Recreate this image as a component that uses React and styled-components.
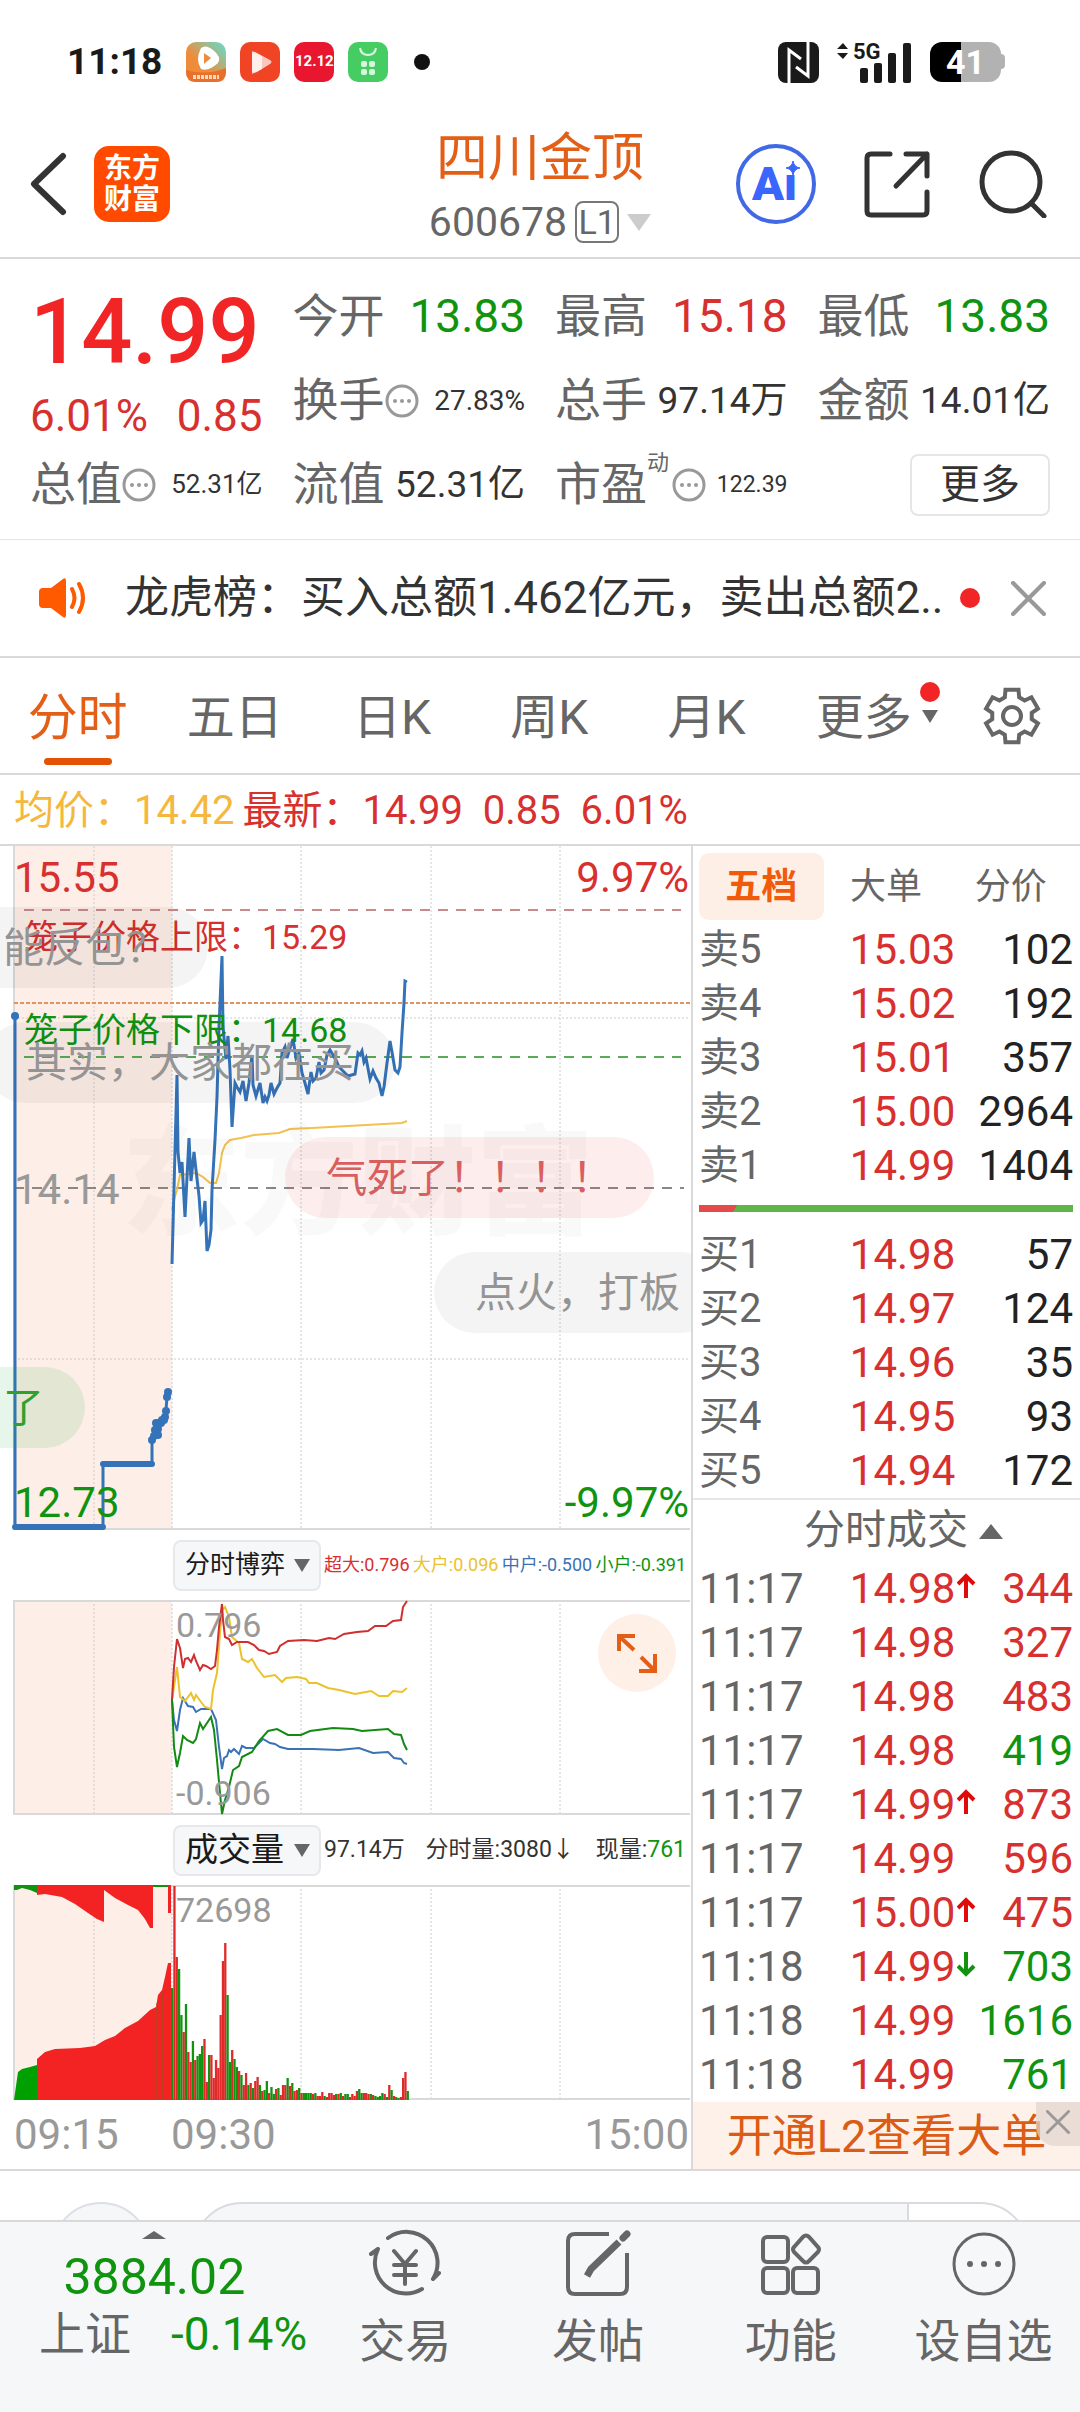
import React from "react";
import styled, { createGlobalStyle } from "styled-components";

const RED = "#d7302f";
const BRIGHT_RED = "#f12525";
const GREEN = "#109410";
const ORANGE = "#e35f17";
const GRAY = "#666";
const DARK = "#333";
const LINE = "#d9d9d9";

const GlobalStyle = createGlobalStyle`
    * {
        box-sizing: border-box;
    }

    body {
        margin: 0;
        background: #fff;
        color: ${DARK};
        font-family: Roboto, "Noto Sans CJK SC", sans-serif;
        line-height: 1.2;
    }

    button {
        margin: 0;
        padding: 0;
        border: 0;
        background: none;
        color: inherit;
        font: inherit;
        cursor: pointer;
    }

    svg {
        display: block;
    }
`

const Page = styled.div`
    overflow: hidden;
`

/* status bar */

const StatusBar = styled.div`
    display: flex;
    align-items: center;
    height: 124px;
    padding: 0 79px 0 67px;
    color: #1a1a1a;
`

const Clock = styled.div`
    margin-right: 24px;
    font-size: 37px;
    font-weight: 700;
`

const AppIcons = styled.div`
    display: flex;
    align-items: center;
    gap: 14px;
    flex: 1;
`

const SaleIcon = styled.div`
    width: 40px;
    height: 40px;
    border-radius: 10px;
    background: #e8162f;
    color: #fff;
    font-size: 15px;
    font-weight: 700;
    line-height: 38px;
    text-align: center;
`

const Dot = styled.i`
    width: ${props => props.size}px;
    height: ${props => props.size}px;
    margin-left: ${props => props.gap || 0}px;
    border-radius: 50%;
    background: ${props => props.color};
`

const StatusIcons = styled.div`
    display: flex;
    align-items: center;
    gap: 18px;
`

const Battery = styled.div`
    position: relative;
    width: 71px;
    height: 40px;
    border-radius: 12px;
    background: linear-gradient(90deg, #000 31px, #b2b2b2 31px);
    color: #fff;
    font-size: 34px;
    font-weight: 700;
    line-height: 40px;
    text-align: center;

    &::after {
        content: "";
        position: absolute;
        top: 12px;
        right: -4px;
        width: 4px;
        height: 15px;
        border-radius: 0 4px 4px 0;
        background: #b2b2b2;
    }
`

/* header */

const Header = styled.header`
    display: grid;
    grid-template-columns: 1fr auto 1fr;
    align-items: center;
    height: 135px;
    padding: 0 33px 15px 30px;
    border-bottom: 2px solid ${LINE};
`

const HeaderSide = styled.div`
    display: flex;
    align-items: center;
    justify-content: ${props => props.end ? "flex-end" : "flex-start"};
    gap: ${props => props.gap}px;
`

const HeaderTitle = styled.div`
    padding: 4px 0 0 3px;
`

const Logo = styled.div`
    width: 76px;
    height: 76px;
    padding: 7px 0;
    border-radius: 15px;
    background: #ff4a00;
    color: #fff;
    font-size: 28px;
    font-weight: 700;
    line-height: 31px;
    text-align: center;
`

const Title = styled.h1`
    margin: 0;
    color: ${ORANGE};
    font-size: 52px;
    font-weight: 400;
    line-height: 62px;
    text-align: center;
`

const Code = styled.button`
    display: flex;
    align-items: center;
    justify-content: center;
    gap: 8px;
    width: 100%;
    margin-top: 11px;
    color: ${GRAY};
    font-size: 41px;
    line-height: 42px;
`

const Level = styled.span`
    width: 44px;
    border: 2px solid #777;
    border-radius: 8px;
    font-size: 34px;
    line-height: 38px;
    text-align: center;
`

const Triangle = styled.i`
    width: 0;
    height: 0;
    border: solid transparent;
    border-width: 0 ${props => props.half}px;
    border-${props => props.up ? "bottom" : "top"}: ${props => props.tall}px solid ${props => props.color || GRAY};
`

/* quote figures */

const Stats = styled.section`
    display: grid;
    grid-template-columns: repeat(4, minmax(0, 1fr));
    grid-auto-rows: 84px;
    column-gap: 30px;
    padding: 16px 30px 12px;
    border-bottom: 1px solid #e6e6e6;
`

const PriceCell = styled.div`
    grid-row: span 2;
    display: flex;
    flex-direction: column;
    gap: 18px;
    padding-top: 18px;
`

const Price = styled.div`
    color: ${BRIGHT_RED};
    font-size: 90px;
    font-weight: 500;
    line-height: 80px;
`

const Change = styled.div`
    display: flex;
    justify-content: space-between;
    color: ${RED};
    font-size: 44px;
    line-height: 50px;
`

const Stat = styled.div`
    display: flex;
    align-items: center;
    white-space: nowrap;
`

const StatLabel = styled.span`
    color: ${GRAY};
    font-size: 46px;
`

const StatSup = styled.sup`
    align-self: flex-start;
    margin-right: 3px;
    font-size: 22px;
    line-height: 40px;
    color: ${GRAY};
`

const StatValue = styled.span`
    margin-left: auto;
    color: ${props => props.color || DARK};
    font-size: ${props => props.size}px;
`

const MoreButton = styled.button`
    align-self: center;
    justify-self: end;
    width: 140px;
    height: 62px;
    border: 2px solid #e4e6e8;
    border-radius: 8px;
    font-size: 40px;
`

/* notice */

const Notice = styled.section`
    display: flex;
    align-items: center;
    height: 118px;
    padding: 0 34px 0 38px;
    border-bottom: 2px solid ${LINE};
`

const NoticeText = styled.p`
    flex: 1;
    margin: 0 15px 0 37px;
    overflow: hidden;
    font-size: 44px;
    white-space: nowrap;
`

const CloseButton = styled.button`
    margin-left: 31px;
`

/* period tabs */

const Tabs = styled.nav`
    display: flex;
    height: 117px;
    border-bottom: 2px solid ${LINE};
`

const Tab = styled.button`
    position: relative;
    flex: 157;
    padding: 5px 2px 0 0;
    color: ${props => props.active ? ORANGE : GRAY};
    font-size: ${props => props.active ? 50 : 48}px;

    &::after {
        content: "";
        position: absolute;
        bottom: 8px;
        left: 50%;
        width: 68px;
        height: 7px;
        margin-left: -35px;
        border-radius: 4px;
        background: ${props => props.active ? "#e35205" : "transparent"};
    }
`

const TabMark = styled.span`
    position: absolute;
    top: 24px;
    right: 4px;
    display: flex;
    flex-direction: column;
    align-items: center;
    gap: 8px;
`

const SettingsButton = styled.button`
    flex: 138;
    display: flex;
    align-items: center;
    justify-content: center;
`

const Legend = styled.div`
    display: flex;
    height: 71px;
    padding-left: 14px;
    border-bottom: 2px solid ${LINE};
    font-size: 40px;
    line-height: 71px;
    white-space: pre;
    color: ${RED};
`

const Average = styled.span`
    margin-right: 8px;
    color: #f5b83d;
`

/* charts */

const Main = styled.main`
    display: grid;
    grid-template-columns: 77fr 43fr;
    border-bottom: 2px solid ${LINE};
`

const Charts = styled.section`
    min-width: 0;
    border-right: 2px solid ${LINE};
`

const Chart = styled.div`
    position: relative;
    height: ${props => props.tall}px;
    overflow: hidden;

    svg {
        width: 100%;
        height: 100%;
    }
`

const ChartLabel = styled.span`
    position: absolute;
    ${props => props.right ? "right: 2px" : `left: ${props.left}px`};
    top: ${props => props.top}px;
    color: ${props => props.color || "#999"};
    font-size: ${props => props.size}px;
    line-height: 42px;
    white-space: nowrap;
`

const Watermark = styled.span`
    position: absolute;
    top: 274px;
    left: 122px;
    color: rgba(0, 0, 0, 0.025);
    font-size: 118px;
    font-weight: 900;
    line-height: 130px;
`

const Bubble = styled.span`
    position: absolute;
    top: ${props => props.top}px;
    left: ${props => props.left}px;
    height: 81px;
    padding: 0 41px;
    border-radius: 41px;
    background: ${props => props.fill || "rgba(0, 0, 0, 0.045)"};
    color: ${props => props.color || "#949494"};
    font-size: 41px;
    line-height: 82px;
    white-space: nowrap;
`

const PanelBar = styled.div`
    display: flex;
    align-items: center;
    height: 70px;
    padding-left: 173px;
    white-space: nowrap;
`

const PanelSelect = styled.button`
    display: flex;
    flex: none;
    align-items: center;
    justify-content: space-between;
    width: 148px;
    height: 51px;
    padding: 0 9px 0 10px;
    border: 2px solid #e6e8ec;
    border-radius: 8px;
    background: #f6f7f9;
    color: #1a1a1a;
    font-size: ${props => props.size}px;
`

const PanelValues = styled.div`
    display: flex;
    flex: 1;
    justify-content: space-between;
    padding: 0 5px 0 3px;
    font-size: ${props => props.size}px;
`

const Tint = styled.span`
    color: ${props => props.color};
`

const ExpandButton = styled.button`
    position: absolute;
    top: 14px;
    right: 15px;
    width: 78px;
    height: 78px;
    border-radius: 50%;
    background: #feefe7;
`

const TimeAxis = styled.div`
    display: flex;
    height: 68px;
    padding: 0 2px 0 14px;
    color: #999;
    font-size: 42px;
    line-height: 70px;
`

const AxisTime = styled.span`
    width: ${props => props.last ? "auto" : "157px"};
    margin-left: ${props => props.last ? "auto" : 0};
`

/* order book */

const Book = styled.aside`
    min-width: 0;
`

const BookTabs = styled.div`
    display: flex;
    margin: 7px 7px 0 6px;
`

const BookTab = styled.button`
    flex: 1;
    height: 67px;
    padding-top: 3px;
    border-radius: 10px;
    background: ${props => props.active ? "#feefe6" : "none"};
    color: ${props => props.active ? "#f15a0a" : GRAY};
    font-size: 36px;
    font-weight: ${props => props.active ? 700 : 400};
`

const BookTable = styled.table`
    width: 100%;
    margin-top: ${props => props.gap || 0}px;
    border-collapse: collapse;
    table-layout: fixed;
    font-size: 42px;

    tr {
        height: 54px;
    }
`

const RowName = styled.th`
    width: 40%;
    padding: 0 0 0 6px;
    color: ${GRAY};
    font-size: ${props => props.size}px;
    font-weight: 400;
    line-height: 54px;
    text-align: left;
`

const RowPrice = styled.td`
    width: 33%;
    padding: 0 0 0 2px;
    color: ${RED};
    line-height: 54px;
    white-space: nowrap;

    svg {
        display: inline-block;
        margin: 0 0 4px 2px;
    }
`

const RowCount = styled.td`
    padding: 0 7px 0 0;
    color: ${props => props.color || "#222"};
    line-height: 54px;
    text-align: right;
`

const Balance = styled.div`
    height: 7px;
    margin: 12px 7px 16px 6px;
    background: linear-gradient(120deg, #e34b4b 33px, #5fb548 33px);
`

const TradesHeader = styled.button`
    display: flex;
    align-items: center;
    justify-content: center;
    gap: 11px;
    width: 100%;
    height: 64px;
    padding-left: 34px;
    border-top: 2px solid #e6e6e6;
    color: ${GRAY};
    font-size: 41px;
`

const Promo = styled.div`
    position: relative;
    height: 67px;
    background: #fdf1ea;
`

const PromoLink = styled.a`
    display: block;
    color: #db5c14;
    font-size: 45px;
    line-height: 69px;
    text-align: center;
    text-decoration: none;
`

const PromoClose = styled.button`
    position: absolute;
    top: 0;
    right: 0;
    display: flex;
    justify-content: center;
    width: 44px;
    height: 44px;
    padding-top: 8px;
    border-radius: 0 0 0 20px;
    background: rgba(225, 212, 205, 0.7);
`

/* bottom */

const Peek = styled.div`
    display: flex;
    gap: 41px;
    height: 49px;
    padding: 31px 50px 0 51px;
    overflow: hidden;
`

const PeekCircle = styled.div`
    flex: none;
    width: 100px;
    height: 100px;
    border: 2px solid #dcdfe6;
    border-radius: 50%;
    background: #f6f7f9;
`

const PeekPill = styled.div`
    flex: 1;
    height: 100px;
    border: 2px solid #d9dbe0;
    border-radius: 50px;
    background: linear-gradient(270deg, #fff 119px, #d9dbe0 119px, #d9dbe0 121px, #f6f7f9 121px);
`

const BottomBar = styled.footer`
    display: flex;
    height: 193px;
    border-top: 2px solid ${LINE};
    background: #f6f7f9;
`

const IndexButton = styled.button`
    display: flex;
    flex: 309;
    flex-direction: column;
    align-items: center;
    justify-content: flex-start;
    padding-top: 9px;
    color: ${GREEN};
`

const IndexValue = styled.span`
    margin-top: 8px;
    font-size: 50px;
    line-height: 60px;
`

const IndexRow = styled.span`
    display: flex;
    gap: 40px;
    padding-left: 39px;
    align-self: flex-start;
    font-size: 46px;
    line-height: 54px;
    white-space: nowrap;
`

const Action = styled.button`
    display: flex;
    flex: 193;
    flex-direction: column;
    align-items: center;
    padding-top: 7px;
    color: ${GRAY};
    font-size: 46px;
    line-height: 54px;

    svg {
        margin-bottom: 15px;
    }
`

/* data */

const priceLine = "172,418 177,229 178,306 180,327 182,316 185,371 189,292 191,335 194,306 196,324 199,350 201,377 203,374 205,355 207,405 209,399 211,384 212,344 215,294 217,251 219,181 222,110 223,181 226,213 228,190 230,224 232,281 235,237 237,241 240,246 243,235 246,255 249,237 252,209 253,239 256,250 260,237 263,257 265,251 267,255 269,249 271,237 274,248 277,242 280,237 282,207 285,201 287,212 290,202 293,193 296,212 299,207 302,227 305,237 308,248 311,226 313,235 316,232 319,216 321,227 324,224 327,209 330,204 333,209 336,214 339,221 344,226 348,230 355,228 358,207 360,209 362,205 364,216 366,212 370,233 373,225 376,232 379,237 382,250 384,241 387,217 390,195 392,206 395,224 398,227 400,221 402,187 404,157 405,135 407,136";
const averageLine = "172,364 174,354 177,344 180,329 188,328 196,327 203,331 210,337 216,337 219,327 222,307 225,299 230,294 241,292 254,289 279,287 290,283 312,282 348,280 402,277 407,275";
const auctionLine = "15,170 15,681 103,681 103,618 152,618 152,594 155,591 156,577 158,589 159,577 162,574 165,571 166,564 167,551 168,546";
const auctionDots = [[15, 170], [152, 594], [154, 590], [155, 584], [156, 577], [158, 589], [158, 583], [159, 577], [161, 577], [162, 574], [164, 574], [165, 571], [166, 565], [167, 551], [168, 546]];

const flows = [
    { color: "#3b72b5", points: "172,100 174,120 177,131 180,110 183,98 188,106 193,107 196,112 201,109 211,109 216,120 219,147 222,169 224,158 227,156 229,150 231,152 234,149 239,154 242,146 246,148 254,148 263,139 270,143 275,144 280,147 288,149 313,149 339,150 359,148 373,153 388,152 394,158 401,159 404,163 407,164" },
    { color: "#ebc22b", points: "172,100 177,67 180,97 185,101 191,93 194,100 196,95 201,102 205,107 211,109 213,90 217,73 220,33 222,10 225,7 229,17 232,37 239,43 242,59 248,62 252,59 257,68 264,77 275,75 282,82 286,78 297,77 306,79 309,83 317,83 328,88 339,90 355,94 371,91 379,96 388,96 393,91 402,92 407,88" },
    { color: "#138a13", points: "172,100 174,147 177,167 180,153 183,136 187,140 193,143 196,139 200,123 203,129 211,117 214,130 217,160 220,193 222,214 225,200 229,187 233,170 239,166 242,157 252,152 259,141 268,131 277,129 288,135 301,135 310,131 333,128 353,129 362,131 388,129 394,134 401,135 404,144 407,150" },
    { color: "#cf2f2f", points: "172,100 174,67 177,39 180,48 183,68 185,59 188,58 191,62 194,55 196,61 200,70 203,65 206,66 211,69 215,66 217,50 219,27 222,4 223,20 225,37 229,39 232,45 237,42 248,42 254,45 259,50 264,51 269,54 277,52 280,46 288,41 304,40 317,41 329,38 335,39 344,34 357,32 368,31 375,26 386,26 393,21 401,20 403,7 407,1" },
];

// one entry per minute: height and direction
const volumes = "112g 214r 143r 131g 85g 68r 96g 48r 38r 59g 40r 44g 46g 54g 61r 18r 45g 45r 22r 40r 32r 85r 139r 157r 105g 38g 50r 41g 33g 29r 25g 15r 27r 15g 17r 12g 19r 23r 15g 9r 10g 19g 7r 13g 6g 11r 12g 5r 15r 15r 22g 14r 17g 9r 10r 12g 7r 7g 7g 7g 7g 6r 7g 4r 4r 8r 4g 3r 7r 7r 5r 6g 6r 7g 4r 6g 6g 3r 6r 4r 9r 11g 7g 7r 7r 6r 6g 5r 4g 3g 4g 7g 6r 3g 15r 10g 4r 3g 2g 3r 22r 28r 9g"
    .split(" ")
    .map(item => ({ tall: parseInt(item, 10), color: item.endsWith("r") ? "#e02a2a" : "#109410" }));

const sells = [["卖5", "15.03", 102], ["卖4", "15.02", 192], ["卖3", "15.01", 357], ["卖2", "15.00", 2964], ["卖1", "14.99", 1404]];
const buys = [["买1", "14.98", 57], ["买2", "14.97", 124], ["买3", "14.96", 35], ["买4", "14.95", 93], ["买5", "14.94", 172]];

const trades = [
    ["11:17", "14.98", 344, RED, "up"],
    ["11:17", "14.98", 327, RED],
    ["11:17", "14.98", 483, RED],
    ["11:17", "14.98", 419, GREEN],
    ["11:17", "14.99", 873, RED, "up"],
    ["11:17", "14.99", 596, RED],
    ["11:17", "15.00", 475, RED, "up"],
    ["11:18", "14.99", 703, GREEN, "down"],
    ["11:18", "14.99", 1616, GREEN],
    ["11:18", "14.99", 761, GREEN],
];

/* icons */

const CloseIcon = ({ size, color }) => (
    <svg width={size} height={size} viewBox="0 0 34 34" stroke={color} strokeWidth="4" strokeLinecap="round">
        <path d="M2 2L32 32M32 2L2 32" />
    </svg>
)

const InfoIcon = () => (
    <svg width="34" height="34" viewBox="0 0 34 34" fill="#999">
        <circle cx="17" cy="17" r="15" fill="none" stroke="#999" strokeWidth="3" />
        <circle cx="10" cy="17" r="2" />
        <circle cx="17" cy="17" r="2" />
        <circle cx="24" cy="17" r="2" />
    </svg>
)

const gearPoints = [0, 60, 120, 180, 240, 300].flatMap(base =>
    [[-21, 20], [-14, 27], [14, 27], [21, 20]].map(([turn, radius]) => {
        const angle = (base + turn - 90) * Math.PI / 180;
        return `${30 + radius * Math.cos(angle)},${30 + radius * Math.sin(angle)}`;
    })
).join(" ");

const GearIcon = () => (
    <svg width="60" height="60" viewBox="0 0 60 60" fill="none" stroke={GRAY} strokeWidth="4">
        <polygon points={gearPoints} />
        <circle cx="30" cy="30" r="9" />
    </svg>
)

const SpeakerIcon = () => (
    <svg width="50" height="42" viewBox="0 0 50 42" fill="#ff5a00">
        <path d="M5 11h8L25 2q3-2 3 2v34q0 4-3 2L13 31H5q-4 0-4-4V15q0-4 4-4z" />
        <path d="M34 12q5 9 0 18M41 7q8 14 0 28" fill="none" stroke="#ff5a00" strokeWidth="4" strokeLinecap="round" />
    </svg>
)

const TickArrow = ({ down }) => (
    <svg width="19" height="26" viewBox="0 0 19 26" fill="none" stroke={down ? GREEN : "#df0b0b"} strokeWidth="4">
        <path d={down ? "M9 1v22M1 15l8 8 8-8" : "M9 25V3M1 11l8-8 8 8"} />
    </svg>
)

const Grid = ({ tall }) => (
    <>
        <rect x="14" width="158" height={tall} fill="#fdeee7" />
        <path d={`M94 0V${tall}M172 0V${tall}M301 0V${tall}M431 0V${tall}M560 0V${tall}`} stroke="#ccc" strokeDasharray="2 2" fill="none" />
        <path d={`M690 ${tall - 1}H14V0`} stroke={LINE} strokeWidth="2" fill="none" />
    </>
)

const PriceChart = () => (
    <Chart tall={684}>
        <Watermark>东方财富</Watermark>
        <svg viewBox="0 0 691 684" preserveAspectRatio="none" fill="none">
            <Grid tall={684} />
            <path d="M14 172H690M14 513H690" stroke="#ccc" strokeDasharray="2 2" />
            <path d="M24 64H681" stroke="#c98a8a" strokeWidth="2" strokeDasharray="10 8" />
            <path d="M14 157H690" stroke="#e0935f" strokeWidth="2" strokeDasharray="4 2" />
            <path d="M24 211H681" stroke="#58ac58" strokeWidth="2" strokeDasharray="10 8" />
            <path d="M14 342H684" stroke="#888" strokeWidth="2" strokeDasharray="10 8" />
            <polyline points={averageLine} stroke="#f2c14e" strokeWidth="2" />
            <polyline points={priceLine} stroke="#3573b9" strokeWidth="3" />
            <polyline points={auctionLine} stroke="#3573b9" strokeWidth="3" />
            <path d="M15 681H103M103 618H152" stroke="#3573b9" strokeWidth="6" strokeLinecap="round" />
            {auctionDots.map(([x, y]) => <circle key={`${x}-${y}`} cx={x} cy={y} r="4" fill="#3573b9" />)}
        </svg>
        <ChartLabel left={14} top={11} size={42} color={RED}>15.55</ChartLabel>
        <ChartLabel right top={11} size={42} color={RED}>9.97%</ChartLabel>
        <ChartLabel left={24} top={70} size={34} color={RED}>笼子价格上限：15.29</ChartLabel>
        <ChartLabel left={24} top={163} size={34} color={GREEN}>笼子价格下限：14.68</ChartLabel>
        <ChartLabel left={14} top={323} size={42}>14.14</ChartLabel>
        <ChartLabel left={14} top={636} size={42} color={GREEN}>12.73</ChartLabel>
        <ChartLabel right top={636} size={42} color={GREEN}>-9.97%</ChartLabel>
        <Bubble left={-38} top={61}>能反包？</Bubble>
        <Bubble left={-15} top={176}>其实，大家都在买</Bubble>
        <Bubble left={285} top={291} fill="rgba(240, 60, 60, 0.09)" color="#d95f5f">气死了！！！！</Bubble>
        <Bubble left={434} top={406}>点火，打板</Bubble>
        <Bubble left={-38} top={521} fill="rgba(30, 170, 60, 0.11)" color="#2da02d">了</Bubble>
    </Chart>
)

const FlowChart = () => (
    <Chart tall={215}>
        <svg viewBox="0 0 691 215" preserveAspectRatio="none" fill="none">
            <Grid tall={215} />
            <path d="M14 1H690" stroke={LINE} strokeWidth="2" />
            {flows.map(flow => (
                <polyline key={flow.color} points={flow.points} stroke={flow.color} strokeWidth="2" />
            ))}
        </svg>
        <ChartLabel left={176} top={4} size={34}>0.796</ChartLabel>
        <ChartLabel left={176} top={172} size={34}>-0.906</ChartLabel>
        <ExpandButton aria-label="全屏">
            <svg viewBox="0 0 78 78" fill="none" stroke={ORANGE} strokeWidth="4">
                <path d="M21 37V22H37M22 23L36 36M57 40V57H41M56 56L43 43" />
            </svg>
        </ExpandButton>
    </Chart>
)

const VolumeChart = () => (
    <Chart tall={215}>
        <svg viewBox="0 0 691 215" preserveAspectRatio="none">
            <Grid tall={215} />
            <path d="M14 1H690" stroke={LINE} strokeWidth="2" />
            <path d="M14 0H37V8L30 5 22 3 17 5H14zM153 0H168V2H153z" fill="#109410" />
            <path d="M37 0H153V43L150 43 145 34 138 25 128 20 115 13 104 5V37L97 34 88 28 75 19 62 12 45 9 37 10zM168 0H171V28H168z" fill="#f32323" />
            <path d="M14 215L18 187 22 184 30 182 37 180V215z" fill="#00a000" />
            <path d="M37 215V174L45 167 55 164 80 163 95 161 105 155 115 151 125 143 138 136 150 125 156 122 158 110 162 105 165 92 168 78H171V215z" fill="#f32323" />
            <path d="M157 118V215M162 107V215" stroke="#8a5a17" strokeWidth="1" />
            {volumes.map((item, index) => (
                <rect key={index} x={171 + index * 2.31} y={215 - item.tall} width="2.3" height={item.tall} fill={item.color} />
            ))}
        </svg>
        <ChartLabel left={176} top={4} size={34}>72698</ChartLabel>
    </Chart>
)

const Level5 = ({ rows, gap }) => (
    <BookTable gap={gap}>
        <tbody>
            {rows.map(([name, price, count]) => (
                <tr key={name}>
                    <RowName scope="row" size={40}>{name}</RowName>
                    <RowPrice>{price}</RowPrice>
                    <RowCount>{count}</RowCount>
                </tr>
            ))}
        </tbody>
    </BookTable>
)

const App = () => (
    <Page>
        <GlobalStyle />

        <StatusBar>
            <Clock>11:18</Clock>
            <AppIcons>
                <svg width="40" height="40" viewBox="0 0 40 40">
                    <defs>
                        <linearGradient id="videoFill" x1="0" y1="1" x2="1" y2="0">
                            <stop offset="0.4" stopColor="#ee8c3c" />
                            <stop offset="1" stopColor="#5fe0d0" />
                        </linearGradient>
                    </defs>
                    <rect width="40" height="40" rx="10" fill="url(#videoFill)" />
                    <path d="M0 28Q20 34 40 26V30Q40 40 30 40H10Q0 40 0 30z" fill="#e8702a" />
                    <path d="M15 6Q20 2 27 8 36 15 32 21 22 30 15 27 9 18 15 6z" fill="#fff" />
                    <path d="M18 11L25 16 18 22z" fill="#ee8c3c" />
                    <path d="M7 35H33" stroke="#fbd9b8" strokeWidth="4" strokeDasharray="3 1" />
                </svg>
                <svg width="40" height="40" viewBox="0 0 40 40">
                    <rect width="40" height="40" rx="10" fill="#f04425" />
                    <path d="M12 9L22 14V27L12 32z" fill="#fff" opacity="0.7" />
                    <path d="M12 12Q13 8 17 11L30 18Q33 20 30 22L17 30Q12 32 12 28z" fill="#fff" opacity="0.7" />
                </svg>
                <SaleIcon>12.12</SaleIcon>
                <svg width="40" height="40" viewBox="0 0 40 40">
                    <rect width="40" height="40" rx="10" fill="#45cd64" />
                    <path d="M12 6Q13 13 20 13T28 6" fill="none" stroke="#d6f7dd" strokeWidth="2" />
                    <g fill="#d6f7dd">
                        <rect x="13" y="19" width="6" height="6" rx="2" />
                        <rect x="21" y="19" width="6" height="6" rx="2" />
                        <rect x="13" y="27" width="6" height="6" rx="2" />
                        <rect x="21" y="27" width="6" height="6" rx="2" />
                    </g>
                </svg>
                <Dot size={16} gap={12} color="#111" />
            </AppIcons>
            <StatusIcons>
                <svg width="41" height="41" viewBox="0 0 41 41">
                    <rect width="41" height="41" rx="8" fill="#1a1a1a" />
                    <path d="M11 41V8L23 17M30 0V34L18 25" fill="none" stroke="#fff" strokeWidth="3" />
                </svg>
                <svg width="75" height="53" viewBox="0 -6 75 53" fill="#1a1a1a">
                    <path d="M0 7L6 1 11 7zM0 11H11L6 17z" />
                    <text x="16" y="17" fontSize="22" fontWeight="700" fontFamily="Roboto">5G</text>
                    <rect x="23" y="26" width="8" height="15" rx="2" />
                    <rect x="37" y="21" width="8" height="20" rx="2" />
                    <rect x="51" y="11" width="8" height="30" rx="2" />
                    <rect x="66" y="1" width="8" height="40" rx="2" />
                </svg>
                <Battery>41</Battery>
            </StatusIcons>
        </StatusBar>

        <Header>
            <HeaderSide gap={26}>
                <button aria-label="返回">
                    <svg width="38" height="64" viewBox="0 0 38 64" fill="none" stroke="#333" strokeWidth="6" strokeLinecap="round" strokeLinejoin="round">
                        <path d="M33 4L4 32 33 60" />
                    </svg>
                </button>
                <Logo>东方<br />财富</Logo>
            </HeaderSide>
            <HeaderTitle>
                <Title>四川金顶</Title>
                <Code>
                    600678
                    <Level>L1</Level>
                    <Triangle half={12} tall={17} color="#ccc" />
                </Code>
            </HeaderTitle>
            <HeaderSide end gap={47}>
                <button aria-label="Ai">
                    <svg width="82" height="82" viewBox="0 0 82 82" fill="#3a66fb">
                        <circle cx="41" cy="41" r="38" fill="none" stroke="#4169e6" strokeWidth="4" />
                        <text x="17" y="57" fontSize="47" fontWeight="900" fontFamily="Roboto">Ai</text>
                        <circle cx="56" cy="24" r="8" fill="#fff" />
                        <path d="M58 18Q59 24 65 25 59 26 58 32 57 26 51 25 57 24 58 18z" stroke="#3a66fb" strokeWidth="1" />
                    </svg>
                </button>
                <button aria-label="分享">
                    <svg width="68" height="68" viewBox="0 0 68 68" fill="none" stroke="#333" strokeWidth="5" strokeLinecap="round" strokeLinejoin="round">
                        <path d="M26 4H7Q3 4 3 8V61Q3 65 7 65H59Q63 65 63 61V42M42 4H63V26M63 4L32 36" />
                    </svg>
                </button>
                <button aria-label="搜索">
                    <svg width="68" height="68" viewBox="0 0 68 68" fill="none" stroke="#333" strokeWidth="5" strokeLinecap="round">
                        <circle cx="32" cy="32" r="29" />
                        <path d="M52 53L65 66" />
                    </svg>
                </button>
            </HeaderSide>
        </Header>

        <Stats>
            <PriceCell>
                <Price>14.99</Price>
                <Change><span>6.01%</span><span>0.85</span></Change>
            </PriceCell>
            <Stat><StatLabel>今开</StatLabel><StatValue size={46} color={GREEN}>13.83</StatValue></Stat>
            <Stat><StatLabel>最高</StatLabel><StatValue size={46} color={RED}>15.18</StatValue></Stat>
            <Stat><StatLabel>最低</StatLabel><StatValue size={46} color={GREEN}>13.83</StatValue></Stat>
            <Stat><StatLabel>换手</StatLabel><InfoIcon /><StatValue size={28}>27.83%</StatValue></Stat>
            <Stat><StatLabel>总手</StatLabel><StatValue size={37}>97.14万</StatValue></Stat>
            <Stat><StatLabel>金额</StatLabel><StatValue size={37}>14.01亿</StatValue></Stat>
            <Stat><StatLabel>总值</StatLabel><InfoIcon /><StatValue size={26}>52.31亿</StatValue></Stat>
            <Stat><StatLabel>流值</StatLabel><StatValue size={37}>52.31亿</StatValue></Stat>
            <Stat><StatLabel>市盈</StatLabel><StatSup>动</StatSup><InfoIcon /><StatValue size={23}>122.39</StatValue></Stat>
            <MoreButton>更多</MoreButton>
        </Stats>

        <Notice>
            <SpeakerIcon />
            <NoticeText>龙虎榜：买入总额1.462亿元，卖出总额2..</NoticeText>
            <Dot size={20} color={BRIGHT_RED} />
            <CloseButton aria-label="关闭"><CloseIcon size={35} color="#999" /></CloseButton>
        </Notice>

        <Tabs>
            <Tab active>分时</Tab>
            <Tab>五日</Tab>
            <Tab>日K</Tab>
            <Tab>周K</Tab>
            <Tab>月K</Tab>
            <Tab>
                更多
                <TabMark>
                    <Dot size={20} color={BRIGHT_RED} />
                    <Triangle half={8} tall={13} />
                </TabMark>
            </Tab>
            <SettingsButton aria-label="设置"><GearIcon /></SettingsButton>
        </Tabs>

        <Legend>
            <Average>均价：14.42</Average>
            <span>最新：14.99  0.85  6.01%</span>
        </Legend>

        <Main>
            <Charts>
                <PriceChart />
                <PanelBar>
                    <PanelSelect size={25}>分时博弈<Triangle half={8} tall={13} /></PanelSelect>
                    <PanelValues size={18}>
                        <Tint color={RED}>超大:0.796</Tint>
                        <Tint color="#ebc22b">大户:0.096</Tint>
                        <Tint color="#3b72b5">中户:-0.500</Tint>
                        <Tint color={GREEN}>小户:-0.391</Tint>
                    </PanelValues>
                </PanelBar>
                <FlowChart />
                <PanelBar>
                    <PanelSelect size={33}>成交量<Triangle half={8} tall={13} /></PanelSelect>
                    <PanelValues size={23}>
                        <span>97.14万</span>
                        <span>分时量:3080↓</span>
                        <span>现量:<Tint color={GREEN}>761</Tint></span>
                    </PanelValues>
                </PanelBar>
                <VolumeChart />
                <TimeAxis>
                    <AxisTime>09:15</AxisTime>
                    <AxisTime>09:30</AxisTime>
                    <AxisTime last>15:00</AxisTime>
                </TimeAxis>
            </Charts>

            <Book>
                <BookTabs>
                    <BookTab active>五档</BookTab>
                    <BookTab>大单</BookTab>
                    <BookTab>分价</BookTab>
                </BookTabs>
                <Level5 rows={sells} gap={3} />
                <Balance />
                <Level5 rows={buys} />
                <TradesHeader>分时成交<Triangle up half={12} tall={15} /></TradesHeader>
                <BookTable>
                    <tbody>
                        {trades.map(([time, price, count, color, move], index) => (
                            <tr key={index}>
                                <RowName scope="row" size={42}>{time}</RowName>
                                <RowPrice>{price}{move && <TickArrow down={move === "down"} />}</RowPrice>
                                <RowCount color={color}>{count}</RowCount>
                            </tr>
                        ))}
                    </tbody>
                </BookTable>
                <Promo>
                    <PromoLink href="#l2">开通L2查看大单</PromoLink>
                    <PromoClose aria-label="关闭"><CloseIcon size={24} color="#999" /></PromoClose>
                </Promo>
            </Book>
        </Main>

        <Peek>
            <PeekCircle />
            <PeekPill />
        </Peek>

        <BottomBar>
            <IndexButton>
                <Triangle up half={12} tall={8} />
                <IndexValue>3884.02</IndexValue>
                <IndexRow><Tint color={GRAY}>上证</Tint>-0.14%</IndexRow>
            </IndexButton>
            <Action>
                <svg width="76" height="70" viewBox="0 0 76 70" fill="none" stroke={GRAY} strokeWidth="4" strokeLinecap="round">
                    <path d="M21 9A31 31 0 0 1 66 50M55 60A31 31 0 0 1 11 20M11 20L4 25M66 50L72 44M27 22L38 35 49 22M27 36H49M27 46H49M38 35V55" />
                </svg>
                交易
            </Action>
            <Action>
                <svg width="70" height="70" viewBox="0 0 70 70" fill="none" stroke={GRAY} strokeWidth="4">
                    <path d="M46 5H12Q5 5 5 12V58Q5 65 12 65H57Q64 65 64 58V24" />
                    <path d="M60 9L64 5" strokeWidth="7" strokeLinecap="round" />
                    <path d="M56 13L28 40 24 47" strokeWidth="7" />
                </svg>
                发帖
            </Action>
            <Action>
                <svg width="70" height="70" viewBox="0 0 70 70" fill="none" stroke={GRAY} strokeWidth="4">
                    <rect x="7" y="8" width="25" height="25" rx="4" />
                    <rect x="7" y="39" width="25" height="25" rx="4" />
                    <rect x="37" y="39" width="25" height="25" rx="4" />
                    <path d="M47 8Q50 5 53 8L62 18Q64 20 62 23L53 32Q50 35 47 32L38 23Q36 20 38 18z" />
                </svg>
                功能
            </Action>
            <Action>
                <svg width="70" height="70" viewBox="0 0 70 70" fill={GRAY}>
                    <circle cx="35" cy="35" r="30" fill="none" stroke={GRAY} strokeWidth="3" />
                    <circle cx="21" cy="35" r="3" />
                    <circle cx="35" cy="35" r="3" />
                    <circle cx="49" cy="35" r="3" />
                </svg>
                设自选
            </Action>
        </BottomBar>
    </Page>
)

export default App;
